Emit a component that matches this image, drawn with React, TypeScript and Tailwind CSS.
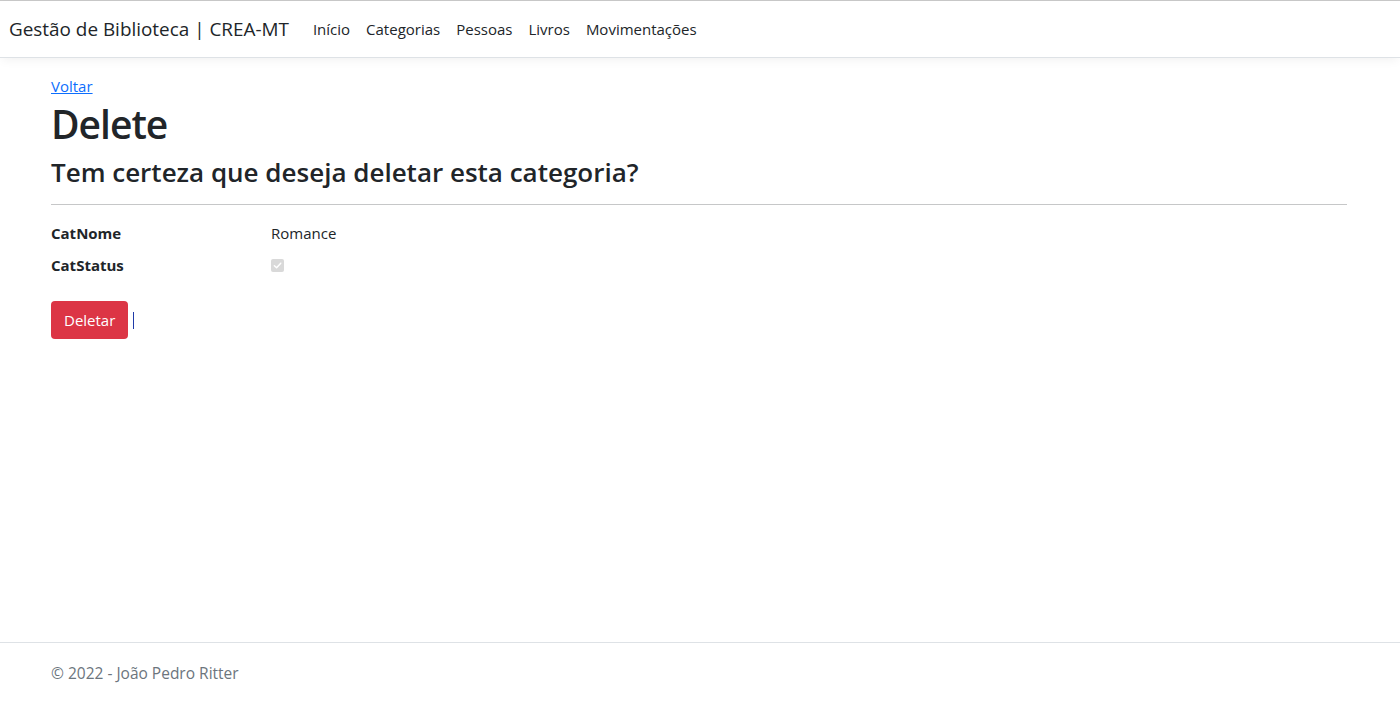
import React from 'react';

const navigation = ['Início', 'Categorias', 'Pessoas', 'Livros', 'Movimentações'];

export default function App() {
  return (
    <div className="relative min-h-[702px] bg-white font-['Open_Sans',sans-serif] text-[#212529]">
      {/* Navbar */}
      <header className="border-t border-[#c8c8c8]">
        <nav className="flex h-[57px] items-center border-b border-[#dee2e6] bg-white px-[9px] shadow-[0_4px_10px_-2px_rgba(0,0,0,0.06)]">
          <span className="mr-4 text-[18.9px] leading-[30px] text-[#212529]">
            Gestão de Biblioteca | CREA-MT
          </span>
          <ul className="flex items-center">
            {navigation.map((item) => (
              <li key={item}>
                <a className="block px-2 text-[15px] leading-6 text-[#212529]" href="#">
                  {item}
                </a>
              </li>
            ))}
          </ul>
        </nav>
      </header>

      {/* Conteúdo */}
      <main className="ml-[51px] w-[1296px] pt-4 pb-24">
        <a href="#" className="text-[15px] leading-6 text-[#0d6efd] underline">
          Voltar
        </a>
        <h1 className="mt-[2px] mb-2 text-[39px] font-semibold leading-[48px] tracking-[-1px]">Delete</h1>
        <h4 className="text-[26px] font-semibold leading-[32px]">
          Tem certeza que deseja deletar esta categoria?
        </h4>
        <hr className="mt-4 mb-4 border-t border-[#c6c7c8]" />

        <dl className="grid grid-cols-[220px_1fr] text-[15px] leading-6">
          <dt className="mb-2 font-bold">CatNome</dt>
          <dd className="mb-2">Romance</dd>
          <dt className="mb-2 font-bold">CatStatus</dt>
          <dd className="mb-2 flex items-center">
            <span className="flex h-[13px] w-[13px] items-center justify-center rounded-[2px] bg-[#d9d9d9]">
              <svg width="9" height="9" viewBox="0 0 10 10" fill="none">
                <path d="M1.5 5.2 L4 7.6 L8.6 2.4" stroke="#fff" strokeWidth="1.6" strokeLinecap="round" strokeLinejoin="round" />
              </svg>
            </span>
          </dd>
        </dl>

        <form className="mt-4 flex items-center">
          <button
            type="button"
            className="h-[38px] rounded-[4px] bg-[#dc3545] px-[13px] text-[15px] text-white"
          >
            Deletar
          </button>
          <span className="ml-[5px] h-[17px] w-px bg-[#1f3aa8]" />
        </form>
      </main>

      {/* Rodapé */}
      <footer className="absolute bottom-0 left-0 right-0 h-[60px] border-t border-[#dee2e6]">
        <div className="ml-[51px] w-[1296px] text-[15.5px] leading-[60px] text-[#6c757d]">
          © 2022 - João Pedro Ritter
        </div>
      </footer>
    </div>
  );
}
